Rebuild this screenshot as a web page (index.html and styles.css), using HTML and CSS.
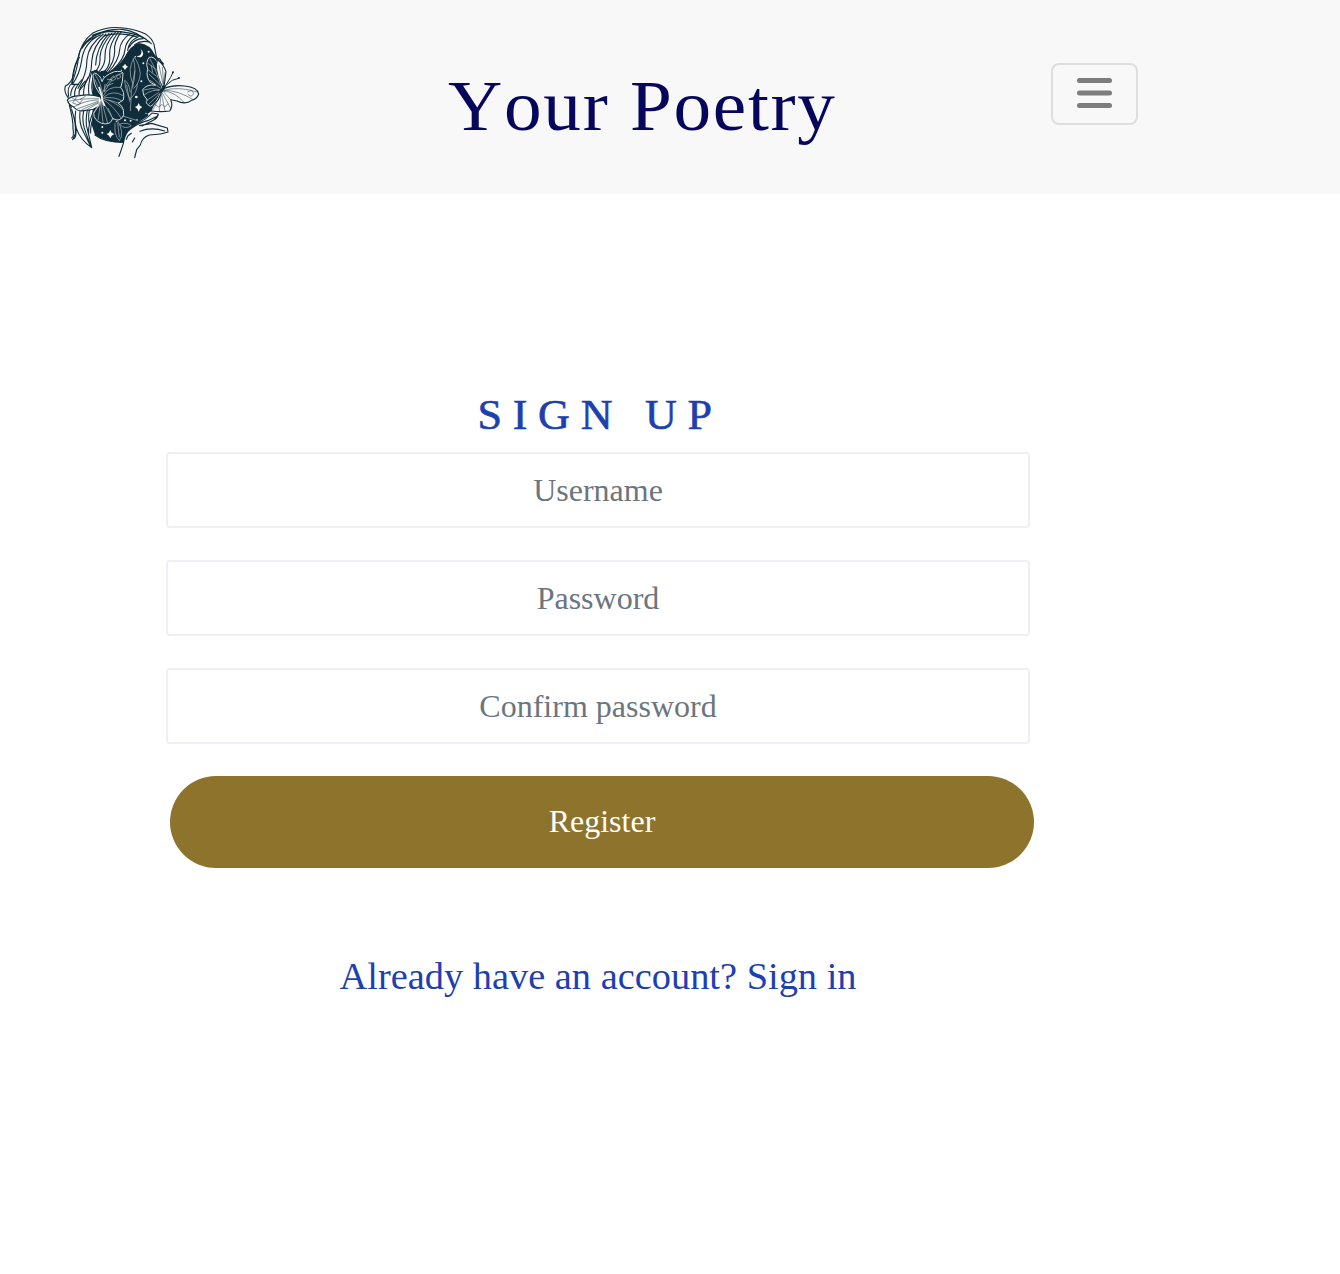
FILE: index.html
```html
<!DOCTYPE html>
<html lang="en">
<head>
<meta charset="utf-8">
<title>Your Poetry</title>
<link rel="stylesheet" href="styles.css">
</head>
<body>
<header class="navbar">
  <a class="logo" href="#" aria-label="Home">
    <svg viewBox="0 0 468 450" width="156" height="150" fill="none" stroke-linecap="round" stroke-linejoin="round">
      <!-- night sky face -->
      <path class="ink" d="M114 162L128 157L135 164L155 158L160 166Q192 148 212 120Q228 86 255 78Q290 82 303 114L309 123L329 140L324 160L313 190L300 278L281 290L286 300L245 325Q220 345 211 376Q160 378 123 354L112 320L116 240Z"/>
      <!-- hair -->
      <path class="paper" d="M113 48Q155 28 210 34Q278 45 297 78L306 116L284 83Q248 62 221 99Q208 140 163 165L155 158L135 164L128 157L114 162Q111 205 119 245L113 320L103 347L113 390Q83 374 66 330L60 370L50 354Q57 330 45 260L33 218Q34 202 54 198Q59 150 73 120Q84 72 113 48Z"/>
      <g class="line">
        <path d="M54 198Q55 160 73 121Q82 74 115 49Q158 26 209 33Q251 38 276 52Q294 64 300 82L307 119"/>
        <path d="M84 88Q125 34 205 37Q249 42 292 80M84 94Q112 47 170 43Q240 43 277 67M115 55Q160 34 226 48M150 57Q192 43 250 60"/>
        <path d="M139 53Q89 77 83 130Q77 172 55 202M126 59Q77 80 73 122Q71 153 54 198M148 51Q103 85 99 127Q99 173 72 214M156 51Q116 87 113 134Q115 180 78 218M165 49Q126 93 125 144M174 48Q140 86 138 119Q140 143 129 158M184 46Q151 83 153 117Q155 142 135 164M193 45Q165 83 167 111Q170 143 155 159M202 44Q178 78 182 103Q182 134 158 164M229 49Q198 72 197 98Q195 130 163 165M241 54Q215 73 213 98Q211 126 178 157M253 59Q224 72 221 100M267 65Q240 65 224 92M286 75Q262 69 242 83"/>
        <path d="M76 121Q61 144 59 172Q54 197 34 207Q29 225 42 241L52 273M54 199Q38 210 44 238M65 202Q51 213 50 235M84 188Q59 213 62 236M94 192Q74 211 75 233M103 181Q87 207 89 235M113 164Q100 207 105 235M118 182Q108 208 119 239M54 202L74 202"/>
        <path d="M46 264Q58 310 57 335Q61 358 53 363M53 277Q67 320 64 350L56 368M65 282Q61 313 67 334Q79 369 113 392M78 282Q74 320 89 346L108 384M89 281Q81 317 99 356L111 391M100 277Q93 320 100 336L113 391M108 270Q101 296 106 320M119 281Q102 320 104 350M123 291Q108 322 110 348M66 335Q68 367 56 366M123 354Q150 376 211 376"/>
        <path d="M306 117L311 124Q320 125 320 131L328 140L322 144"/>
      </g>
      <!-- moon, stars -->
      <path class="star" d="M260 96Q274 110 263 119Q255 124 247 116Q256 119 261 111Q264 104 260 96ZM213 140L217 146L222 149L217 153L213 159L209 153L204 149L209 146ZM254 258L258 266L265 270L258 275L254 284L250 275L243 270L250 266ZM169 339L173 347L181 351L173 356L169 364L165 356L158 351L165 347Z"/>
      <g class="star"><circle cx="284" cy="104" r="3"/><circle cx="268" cy="139" r="3"/><circle cx="244" cy="119" r="2"/><circle cx="262" cy="193" r="3"/><circle cx="247" cy="240" r="4"/><circle cx="230" cy="311" r="3"/><circle cx="145" cy="330" r="3"/><circle cx="145" cy="347" r="3"/><circle cx="187" cy="314" r="2"/><circle cx="213" cy="310" r="3"/><circle cx="249" cy="308" r="2"/><circle cx="202" cy="160" r="2"/><circle cx="149" cy="179" r="2"/><circle cx="276" cy="289" r="2"/></g>
      <!-- leaves -->
      <g class="glow">
        <path d="M229 281Q229 220 242 162M235 197Q219 156 241 121Q255 139 259 170Q257 196 240 214M238 126Q249 157 236 211M229 248Q215 226 212 190Q224 196 229 225M218 205L227 253M229 245Q250 226 250 202M190 310Q213 348 196 371Q179 353 183 320M191 319L196 360M198 321Q222 314 232 327Q212 338 199 324M177 288L251 311"/>
      </g>
      <!-- left butterfly -->
      <path class="paper outline" d="M139 240Q111 230 76 236Q49 237 40 249Q44 264 59 270Q72 287 100 279Q115 281 132 269L143 251Z"/>
      <path class="dark-wing" d="M144 238Q120 211 119 185Q114 172 122 168Q139 173 144 194Q149 176 181 164Q203 161 207 168Q207 195 200 212Q213 224 208 249L192 259Q210 266 209 294Q198 318 176 304Q170 326 143 319Q119 310 119 288Q126 277 139 257Z"/>
      <g class="line thin">
        <path d="M44 253Q71 244 134 245M59 270Q91 250 132 249M71 275L133 253M84 278L133 256M99 278L135 257M54 242L79 259M68 239L56 258L74 264L85 249M94 238L79 247"/>
      </g>
      <g class="glow">
        <path d="M146 236Q142 197 122 171M145 229Q160 180 206 168M148 237Q160 206 200 211M151 239Q176 217 208 236M150 242Q181 239 204 251M148 244Q179 252 209 278M146 247Q176 263 202 304M144 249Q159 276 178 307M143 252L161 319M141 254L147 319M140 256L132 309M139 260L120 288M153 202L151 225L174 188L160 187M170 185L178 177L186 185L177 191ZM188 177L197 171L200 181L192 186ZM158 207L177 199M176 304L162 274M193 258L164 249M123 188Q130 210 140 222"/>
      </g>
      <path class="body-light" d="M136 212L143 236L145 250L151 265"/>
      <!-- right butterfly -->
      <path class="dark-wing" d="M324 214Q317 181 313 142Q302 116 286 121Q274 133 281 157Q275 178 288 195L305 205Q279 200 266 218Q265 235 280 249Q270 257 289 268Q305 262 321 226Z"/>
      <path class="paper outline" d="M310 128Q329 142 336 164L331 203L326 211Q307 175 307 145Z"/>
      <path class="paper outline" d="M332 214Q356 203 392 207Q431 211 434 231Q428 247 413 250Q394 264 369 252L350 248Q358 266 347 282Q321 286 293 282Q291 270 313 248L322 227Z"/>
      <g class="glow"><path d="M288 126Q306 157 321 207M284 140L307 158M283 159L312 181M286 172L317 202M289 190L320 214M292 145L296 166M268 219Q295 210 318 218M271 233Q298 215 318 221M280 249L318 224M285 261L319 228"/></g>
      <g class="line thin"><path d="M315 145L327 201M325 151L329 202M333 167L327 210M330 220Q371 207 430 225M330 220Q374 220 417 248M329 223Q360 222 390 256M328 224L350 248M325 228L351 276M323 232L333 282M321 233L316 283M319 235L298 277M401 225L412 220L420 230L411 238L402 232M304 263L314 270L324 262L332 270L342 261"/></g>
      <path class="body-dark thick" d="M318 225L332 209"/>
      <path class="body-dark" d="M334 207L350 181L357 166M336 205L355 190L374 184"/>
      <circle class="ink" cx="357" cy="166" r="3"/><circle class="ink" cx="375" cy="183" r="3"/>
      <!-- hand -->
      <path class="paper" d="M195 418L208 380Q211 357 221 344L246 320Q279 302 291 289L313 291L307 305L270 326L341 337L342 345L322 349L286 357L263 377L242 422Z"/>
      <g class="line hand"><path d="M195 418L208 380Q211 357 221 344L246 320Q278 308 294 288L313 291Q310 304 299 309L264 327M225 339Q251 318 284 310L310 298M257 326L293 319L340 333L342 345Q324 352 286 354Q264 361 259 384L248 398L242 422M258 343Q292 329 332 342M217 367L222 356L232 349M235 375L242 363"/></g>
    </svg>
  </a>
  <h1 class="brand">Your Poetry</h1>
  <button class="menu" aria-label="Menu">
    <svg width="36" height="32" viewBox="0 0 36 32"><path d="M2.5 3.5H32.5M2.5 16H32.5M2.5 28.5H32.5"/></svg>
  </button>
</header>
<main class="signup">
  <h2 class="heading">SIGN UP</h2>
  <form class="form">
    <input class="field" type="text" placeholder="Username">
    <input class="field" type="password" placeholder="Password">
    <input class="field" type="password" placeholder="Confirm password">
    <button class="register" type="button">Register</button>
  </form>
  <a class="signin" href="#">Already have an account? Sign in</a>
</main>
</body>
</html>
```
FILE: styles.css
```css
* { box-sizing: border-box; }
body {
  margin: 0;
  min-height: 1274px;
  background: #fff;
  font-family: "Liberation Serif", "Times New Roman", serif;
}
.navbar {
  display: flex;
  align-items: flex-start;
  height: 194px;
  padding-left: 54px;
  background: #f8f8f8;
}
.logo { width: 156px; height: 150px; margin-top: 17px; }
.logo svg { display: block; }
.ink { fill: #102d3b; }
.paper { fill: #f8f8f8; }
.star { fill: #f8f8f8; }
.line, .outline { stroke: #102d3b; stroke-width: 3.3; }
.thin { stroke-width: 1.5; }
.hand { stroke-width: 3.5; }
.dark-wing { fill: #102d3b; stroke: #d5d9da; stroke-width: 3; }
.glow { stroke: #b4bdc1; stroke-width: 2; }
.body-light { stroke: #f8f8f8; stroke-width: 5; }
.body-dark { stroke: #102d3b; stroke-width: 3; }
.thick { stroke-width: 8; }
.brand {
  width: 400px;
  margin: 66px 0 0 238px;
  font-size: 71px;
  font-weight: 400;
  font-kerning: none;
  line-height: 80px;
  letter-spacing: 1.6px;
  white-space: nowrap;
  color: #06065c;
  transform: scaleX(1.06);
  transform-origin: left;
}
.menu {
  display: grid;
  place-items: center;
  width: 87px;
  height: 62px;
  margin: 63px 0 0 203px;
  padding: 0 0 2px;
  border: 2px solid #dedede;
  border-radius: 8px;
  background: transparent;
}
.menu path { stroke: #7d7d7d; stroke-width: 5; stroke-linecap: round; }
.signup {
  display: flex;
  flex-direction: column;
  width: 864px;
  margin: 195px 0 0 166px;
  text-align: center;
}
.heading {
  margin: 0 0 11px;
  padding-left: 4px;
  font-size: 42px;
  font-weight: 400;
  line-height: 52px;
  letter-spacing: 10.2px;
  color: #1e40af;
  -webkit-text-stroke: 0.6px #1e40af;
  transform: scaleX(1.05);
}
.form { display: flex; flex-direction: column; gap: 32px; }
.field {
  width: 100%;
  height: 76px;
  padding: 0 24px 0;
  border: 2px solid #efeff7;
  border-radius: 4px;
  background: #fff;
  font: 32px "Liberation Serif", "Times New Roman", serif;
  text-align: center;
}
.field::placeholder { color: #6c757d; opacity: 1; }
.register {
  width: 864px;
  height: 92px;
  margin-left: 4px;
  padding: 0 6px 2px;
  border: 0;
  border-radius: 46px;
  background: #8d732b;
  color: #fff;
  font: 32px "Liberation Serif", "Times New Roman", serif;
}
.signin {
  margin-top: 85px;
  font-size: 38.4px;
  line-height: 46px;
  color: #1e40af;
  text-decoration: none;
}
```
